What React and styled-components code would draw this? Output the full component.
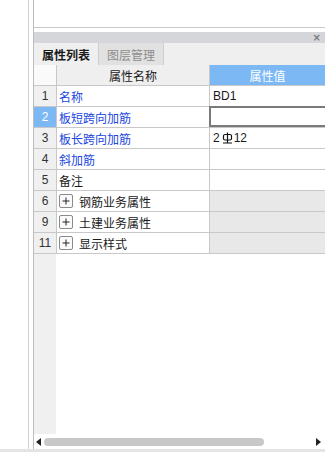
import React from "react";
import styled, { createGlobalStyle } from "styled-components";

const Global = createGlobalStyle`
  html, body { margin: 0; padding: 0; background: #fff; }
  body {
    font-family: "Microsoft YaHei", "Noto Sans CJK SC", "Liberation Sans", sans-serif;
    font-size: 12px;
    color: #1a1a1a;
  }
`;

const Root = styled.div`
  width: 325px;
  height: 452px;
  display: flex;
  flex-direction: column;
  overflow: hidden;
`;

const Body = styled.div`
  flex: 1;
  display: flex;
  min-height: 0;
`;

const LeftStrip = styled.div`
  width: 28px;
  border-right: 1px solid #d2d2d2;
`;

const Main = styled.div`
  flex: 1;
  margin-left: 4px;
  border-left: 1px solid #bdbdbd;
  display: flex;
  flex-direction: column;
  min-width: 0;
`;

const TopPane = styled.div`
  height: 27px;
  border-bottom: 1px solid #c8c8c8;
  margin-bottom: 4px;
`;

const PanelBar = styled.div`
  height: 11px;
  background: #d5d6da;
  display: flex;
  align-items: center;
  justify-content: flex-end;
  padding-right: 4px;
  font-family: "DejaVu Sans", sans-serif;
  font-size: 10px;
  font-weight: bold;
  color: #7a7a7a;
  line-height: 11px;
`;

const Tabs = styled.div`
  height: 22px;
  background: #efefef;
  display: flex;
`;

const Tab = styled.div`
  width: 64px;
  border-right: 1px solid #cfcfcf;
  background: ${p => (p.$active ? "#efefef" : "#e1e1e1")};
  color: ${p => (p.$active ? "#1a1a1a" : "#8c8c8c")};
  display: flex;
  align-items: center;
  justify-content: center;
  font-size: 12px;
  font-weight: ${p => (p.$active ? 600 : 400)};
`;

const Row = styled.div`
  display: grid;
  grid-template-columns: 23px 153px 1fr;
  height: 20px;
  border-bottom: 1px solid #c8c8c8;
`;

const NumCell = styled.div`
  background: ${p => (p.$sel ? "#7cb8f4" : p.$corner ? "#fafafa" : "#f0f0f0")};
  color: ${p => (p.$sel ? "#fff" : "#333")};
  border-right: 1px solid #c8c8c8;
  display: flex;
  align-items: center;
  justify-content: center;
  font-family: "Liberation Sans", sans-serif;
  font-size: 12px;
`;

const NameCell = styled.div`
  background: ${p => (p.$head ? "#efefef" : "#fff")};
  border-right: 1px solid #c8c8c8;
  display: flex;
  align-items: center;
  justify-content: ${p => (p.$head ? "center" : "flex-start")};
  padding-left: ${p => (p.$head ? "0" : "2px")};
  color: ${p => (p.$blue ? "#2146e0" : "#1a1a1a")};
  white-space: nowrap;
`;

const ValueCell = styled.div`
  background: ${p => (p.$head ? "#7cb8f4" : p.$group ? "#e8e8e8" : "#fff")};
  color: ${p => (p.$head ? "#fff" : "#1a1a1a")};
  display: flex;
  align-items: center;
  justify-content: ${p => (p.$head ? "center" : "flex-start")};
  padding-left: ${p => (p.$head ? "0" : "3px")};
  font-family: "Liberation Sans", "Noto Sans CJK SC", sans-serif;
  font-size: 12px;
`;

const EditBox = styled.div`
  box-sizing: border-box;
  border: 2px solid #7a7a7a;
  border-right: none;
  margin-left: -1px;
  margin-top: -1px;
  height: 21px;
`;

const Plus = styled.span`
  width: 12px;
  height: 12px;
  border: 1px solid #8a8a8a;
  border-radius: 2px;
  display: inline-flex;
  align-items: center;
  justify-content: center;
  margin-right: 6px;
  background: #fafafa;
`;

const Filler = styled.div`
  flex: 1;
  display: grid;
  grid-template-columns: 22px 1fr;
`;

const FillNum = styled.div`
  background: #f0f0f0;
`;

const Scroll = styled.div`
  height: 15px;
  display: flex;
  align-items: center;
  padding: 0 4px 0 2px;
  gap: 3px;
`;

const Thumb = styled.div`
  width: 220px;
  height: 8px;
  border-radius: 4px;
  background: #c8c8c8;
`;

const Track = styled.div`
  flex: 1;
`;

const BottomLine = styled.div`
  height: 3px;
  background: #e4e4e4;
`;

const PlusIcon = () => (
  <svg width="8" height="8" viewBox="0 0 8 8">
    <path d="M4 0.5V7.5M0.5 4H7.5" stroke="#222" strokeWidth="1" />
  </svg>
);

const Rebar = () => (
  <svg width="11" height="12" viewBox="0 0 11 12" style={{ margin: "0 1px 0 2px" }}>
    <rect x="1.5" y="2.5" width="8" height="5.5" rx="1.5" fill="none" stroke="#111" strokeWidth="1.2" />
    <path d="M5.5 0.5V11M1 11H10" stroke="#111" strokeWidth="1.2" />
  </svg>
);

const Arrow = ({ dir }) => (
  <svg width="5" height="8" viewBox="0 0 5 8">
    {dir === "left" ? <path d="M5 0V8L0 4Z" fill="#222" /> : <path d="M0 0V8L5 4Z" fill="#222" />}
  </svg>
);

const rows = [
  { n: "1", name: "名称", blue: true, value: "BD1" },
  { n: "2", name: "板短跨向加筋", blue: true, sel: true },
  { n: "3", name: "板长跨向加筋", blue: true, rebar: true },
  { n: "4", name: "斜加筋", blue: true },
  { n: "5", name: "备注" },
  { n: "6", name: "钢筋业务属性", group: true },
  { n: "9", name: "土建业务属性", group: true },
  { n: "11", name: "显示样式", group: true },
];

export default function App() {
  return (
    <Root>
      <Global />
      <Body>
        <LeftStrip />
        <Main>
          <TopPane />
          <PanelBar>×</PanelBar>
          <Tabs>
            <Tab $active>属性列表</Tab>
            <Tab>图层管理</Tab>
          </Tabs>
          <Row>
            <NumCell $corner />
            <NameCell $head>属性名称</NameCell>
            <ValueCell $head>属性值</ValueCell>
          </Row>
          {rows.map(r => (
            <Row key={r.n}>
              <NumCell $sel={r.sel}>{r.n}</NumCell>
              <NameCell $blue={r.blue}>
                {r.group && (
                  <Plus>
                    <PlusIcon />
                  </Plus>
                )}
                {r.name}
              </NameCell>
              {r.sel ? (
                <EditBox />
              ) : (
                <ValueCell $group={r.group}>
                  {r.value}
                  {r.rebar && (
                    <>
                      2<Rebar />12
                    </>
                  )}
                </ValueCell>
              )}
            </Row>
          ))}
          <Filler>
            <FillNum />
            <div />
          </Filler>
          <Scroll>
            <Arrow dir="left" />
            <Thumb />
            <Track />
            <Arrow dir="right" />
          </Scroll>
        </Main>
      </Body>
      <BottomLine />
    </Root>
  );
}
